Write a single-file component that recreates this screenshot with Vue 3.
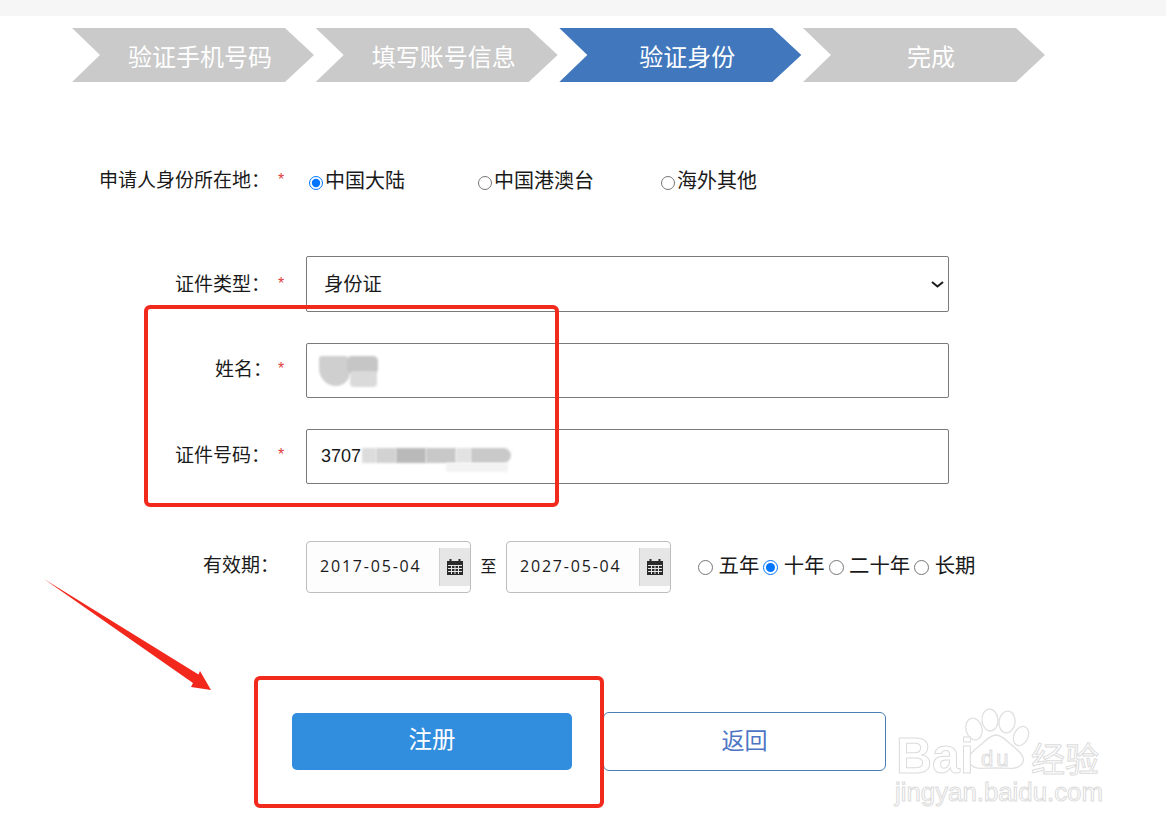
<script setup>
const steps = [
  { text: '验证手机号码', active: false },
  { text: '填写账号信息', active: false },
  { text: '验证身份', active: true },
  { text: '完成', active: false },
]
const regions = [
  { text: '中国大陆', checked: true },
  { text: '中国港澳台', checked: false },
  { text: '海外其他', checked: false },
]
const dates = ['2017-05-04', '2027-05-04']
const terms = [
  { text: '五年', checked: false },
  { text: '十年', checked: true },
  { text: '二十年', checked: false },
  { text: '长期', checked: false },
]
</script>

<template>
  <div class="page">
    <div class="topbar"></div>

    <nav class="steps">
      <div v-for="s in steps" :key="s.text" class="step" :class="{ active: s.active }">{{ s.text }}</div>
    </nav>

    <form class="form" @submit.prevent>
      <div class="row region-row">
        <label class="label">申请人身份所在地：</label><span class="star">*</span>
        <div class="regions">
          <label v-for="r in regions" :key="r.text" class="region">
            <input type="radio" name="region" :checked="r.checked" /><span>{{ r.text }}</span>
          </label>
        </div>
      </div>

      <div class="row type-row">
        <label class="label">证件类型：</label><span class="star">*</span>
        <div class="select-wrap">
          <select class="control select">
            <option>身份证</option>
          </select>
          <svg class="chevron" width="13" height="7" viewBox="0 0 13 7">
            <path d="M1 1l5.5 4.5L12 1" fill="none" stroke="#1a1a1a" stroke-width="2" />
          </svg>
        </div>
      </div>

      <div class="row name-row">
        <label class="label raised name-label">姓名：</label><span class="star raised">*</span>
        <div class="control input-box">
          <div class="mask">
            <i class="m1"></i><i class="m2"></i><i class="m3"></i>
          </div>
        </div>
      </div>

      <div class="row id-row">
        <label class="label raised">证件号码：</label><span class="star raised">*</span>
        <div class="control input-box id-box">
          3707
          <div class="mask">
            <i class="d1"></i><i class="d2"></i><i class="d3"></i><i class="d4"></i><i class="d5"></i><i class="d6"></i><i class="d7"></i>
          </div>
        </div>
      </div>

      <div class="row date-row">
        <label class="label raised date-label">有效期：</label><span class="blank"></span>
        <div class="dates">
          <template v-for="(d, i) in dates" :key="d">
            <span v-if="i === 1" class="to">至</span>
            <div class="date">
              <span class="date-text">{{ d }}</span>
              <span class="cal">
                <svg width="18" height="18" viewBox="0 0 18 18">
                  <path fill="#2b2b2b" d="M1 3h2.5V1h2v2h7V1h2v2H17v14H1z" />
                  <path stroke="#e6e6e6" stroke-width="1" fill="none" d="M2 7.5h14M2 10.5h14M2 13.5h14M5.5 7v9M9 7v9M12.5 7v9" />
                </svg>
              </span>
            </div>
          </template>
        </div>
        <div class="terms">
          <label v-for="t in terms" :key="t.text" class="term">
            <input type="radio" name="term" :checked="t.checked" /><span>{{ t.text }}</span>
          </label>
        </div>
      </div>

      <div class="actions">
        <button type="button" class="btn primary">注册</button>
        <button type="button" class="btn ghost">返回</button>
      </div>
    </form>

    <!-- 截图上的标注 -->
    <div class="mark mark-a"></div>
    <div class="mark mark-b"></div>
    <svg class="arrow" width="1166" height="832" viewBox="0 0 1166 832">
      <polygon fill="#f2281c" points="44,579 198.5,674.5 200,671 211,690 191,687 193,683" />
    </svg>

    <svg class="watermark" width="230" height="130" viewBox="0 0 230 130">
      <g fill="#fff" stroke="#e0e0e0" stroke-width="1.3">
        <ellipse cx="81" cy="24" rx="8" ry="11" transform="rotate(-15 81 24)" />
        <ellipse cx="97" cy="15" rx="8" ry="11" transform="rotate(-5 97 15)" />
        <ellipse cx="114" cy="17" rx="8" ry="11" transform="rotate(8 114 17)" />
        <ellipse cx="128" cy="31" rx="7" ry="10" transform="rotate(25 128 31)" />
        <path d="M103 30c7 0 11 7 18 12 9 7 12 13 7 18-5 5-13 3-25 3s-20 2-25-3c-5-5-2-11 7-18 7-5 11-12 18-12z" />
      </g>
      <g class="wm-text">
        <text x="3" y="68" class="wm-bai">Bai</text>
        <text x="88" y="61" class="wm-du">du</text>
        <text x="138" y="67" class="wm-cn">经验</text>
        <text x="2" y="96" class="wm-url">jingyan.baidu.com</text>
      </g>
    </svg>
  </div>
</template>

<style>
html, body { margin: 0; background: #fff; }
</style>

<style scoped>
.page {
  position: relative;
  width: 1166px;
  height: 832px;
  overflow: hidden;
  background: #fff;
  font-family: "Noto Sans CJK SC", "Liberation Sans", sans-serif;
  color: #1a1a1a;
}
.topbar { height: 16px; background: #f6f6f6; }

.steps {
  display: flex;
  gap: 1.67px;
  margin: 12px 0 0 72px;
}
.step {
  width: 242px;
  height: 54px;
  box-sizing: border-box;
  padding-left: 14px;
  display: flex;
  align-items: center;
  justify-content: center;
  background: #cacaca;
  color: #fff;
  font-size: 24px;
  clip-path: polygon(0 0, 213px 0, 100% 50%, 213px 100%, 0 100%, 28px 50%);
}
.step.active { background: #4077bd; }

.form { display: flex; flex-direction: column; }
.row { display: flex; align-items: center; }
.label {
  width: 270px;
  flex: none;
  text-align: right;
  font-size: 19px;
  line-height: 28px;
  padding-bottom: 2px;
  white-space: nowrap;
}
.star {
  flex: none;
  width: 36px;
  padding-left: 8px;
  box-sizing: border-box;
  color: #e2403a;
  font-family: "Liberation Sans", sans-serif;
  font-size: 16px;
  line-height: 28px;
}
.label.raised { padding-bottom: 6px; }
.label.name-label { width: 272px; }
.star.raised { padding-bottom: 4px; box-sizing: content-box; width: 28px; }
.name-label + .star.raised { padding-left: 6px; }

.region-row { margin-top: 84px; height: 28px; }
.regions {
  display: grid;
  grid-template-columns: 169px 183px auto;
  margin-left: 3px;
}
.region {
  display: flex;
  align-items: center;
  font-size: 20px;
  line-height: 28px;
}
.region input { width: 14px; height: 14px; margin: 5px 2px 0 0; }

.control {
  width: 643px;
  box-sizing: border-box;
  border: 1px solid #7a7a7a;
  border-radius: 2px;
  background: #fff;
}
.type-row { margin-top: 62px; }
.select-wrap { position: relative; display: flex; }
.select {
  appearance: none;
  height: 56px;
  padding: 0 0 2px 17px;
  font-family: "Noto Sans CJK SC", sans-serif;
  font-size: 19.3px;
  color: #1a1a1a;
}
.chevron { position: absolute; left: 625px; top: 25px; pointer-events: none; }
.name-row { margin-top: 31px; }
.id-row { margin-top: 31px; }
.input-box {
  position: relative;
  height: 55px;
  display: flex;
  align-items: center;
  padding-left: 14px;
  font-family: "Liberation Sans", sans-serif;
  font-size: 18px;
}

.mask i { position: absolute; display: block; filter: blur(1.2px); }
.m1 { left: 12px; top: 12px; width: 31px; height: 30px; background: #cfcfcf; border-radius: 3px 6px 16px 20px; }
.m2 { left: 40px; top: 12px; width: 31px; height: 18px; background: #c6c6c6; border-radius: 5px; }
.m3 { left: 43px; top: 27px; width: 27px; height: 16px; background: #dadada; border-radius: 4px; }
.d1 { left: 55px; top: 18px; width: 14px; height: 15px; background: #dcdcdc; }
.d2 { left: 69px; top: 18px; width: 20px; height: 15px; background: #d2d2d2; }
.d3 { left: 89px; top: 18px; width: 30px; height: 15px; background: #b9b9b9; }
.d4 { left: 119px; top: 18px; width: 30px; height: 15px; background: #c8c8c8; }
.d5 { left: 149px; top: 18px; width: 15px; height: 15px; background: #e2e2e2; }
.d6 { left: 164px; top: 18px; width: 40px; height: 15px; background: #c9c9c9; border-radius: 0 8px 8px 0; }
.d7 { left: 139px; top: 33px; width: 62px; height: 9px; background: #f3f3f3; }

.date-row { margin-top: 57px; }
.label.date-label { width: 279px; }
.blank { flex: none; width: 27px; }
.dates { display: flex; align-items: center; }
.date {
  width: 165px;
  height: 52px;
  box-sizing: border-box;
  display: flex;
  align-items: center;
  justify-content: space-between;
  border: 1px solid #bdbdbd;
  border-radius: 4px;
  background: #fdfdfd;
  padding-left: 13px;
}
.date-text {
  font-family: "Open Sans", sans-serif;
  font-size: 16px;
  letter-spacing: 1.8px;
  padding-bottom: 3px;
  color: #1a1a1a;
}
.cal {
  width: 31px;
  height: 38px;
  display: flex;
  align-items: center;
  justify-content: center;
  background: #e6e6e6;
  border-left: 1px solid #cfcfcf;
  box-sizing: border-box;
}
.to { width: 35px; text-align: center; font-size: 16px; padding-bottom: 4px; }

.terms { display: flex; align-items: center; margin-left: 27px; margin-top: -2px; }
.term {
  display: flex;
  align-items: center;
  font-size: 20.4px;
  line-height: 28px;
  margin-right: 4px;
}
.term span { padding-bottom: 5px; }
.term input { width: 15px; height: 15px; margin: 2px 5.5px 0 0; }

.actions {
  display: flex;
  align-items: center;
  margin: 119px 0 0 292px;
  gap: 31px;
}
.btn {
  box-sizing: border-box;
  font-family: "Noto Sans CJK SC", sans-serif;
  font-size: 23px;
  cursor: pointer;
}
.primary {
  width: 280px;
  height: 57px;
  padding: 0 0 8px;
  font-size: 23.5px;
  border: 0;
  border-radius: 5px;
  background: #318ddd;
  color: #fff;
}
.ghost {
  width: 283px;
  height: 59px;
  padding: 0 0 6px;
  border: 1px solid #4a7eb4;
  border-radius: 6px;
  background: #fff;
  color: #4f76c4;
}

.mark {
  position: absolute;
  box-sizing: border-box;
  border: 4px solid #f22a1e;
  border-radius: 6px;
  pointer-events: none;
}
.mark-a { left: 144px; top: 305px; width: 415px; height: 202px; }
.mark-b { left: 254px; top: 676px; width: 350px; height: 132px; }
.arrow { position: absolute; left: 0; top: 0; pointer-events: none; }

.watermark { position: absolute; left: 893px; top: 705px; pointer-events: none; }
.wm-text text {
  fill: #fff;
  stroke: #dcdcdc;
  stroke-width: 1;
  font-family: "Liberation Sans", sans-serif;
}
.wm-bai { font-size: 50px; font-weight: 700; }
.wm-du { font-size: 22px; letter-spacing: 3px; }
.wm-cn { font-size: 34px; font-family: "Noto Sans CJK SC", sans-serif !important; }
.wm-url { font-size: 25.8px; }
</style>
